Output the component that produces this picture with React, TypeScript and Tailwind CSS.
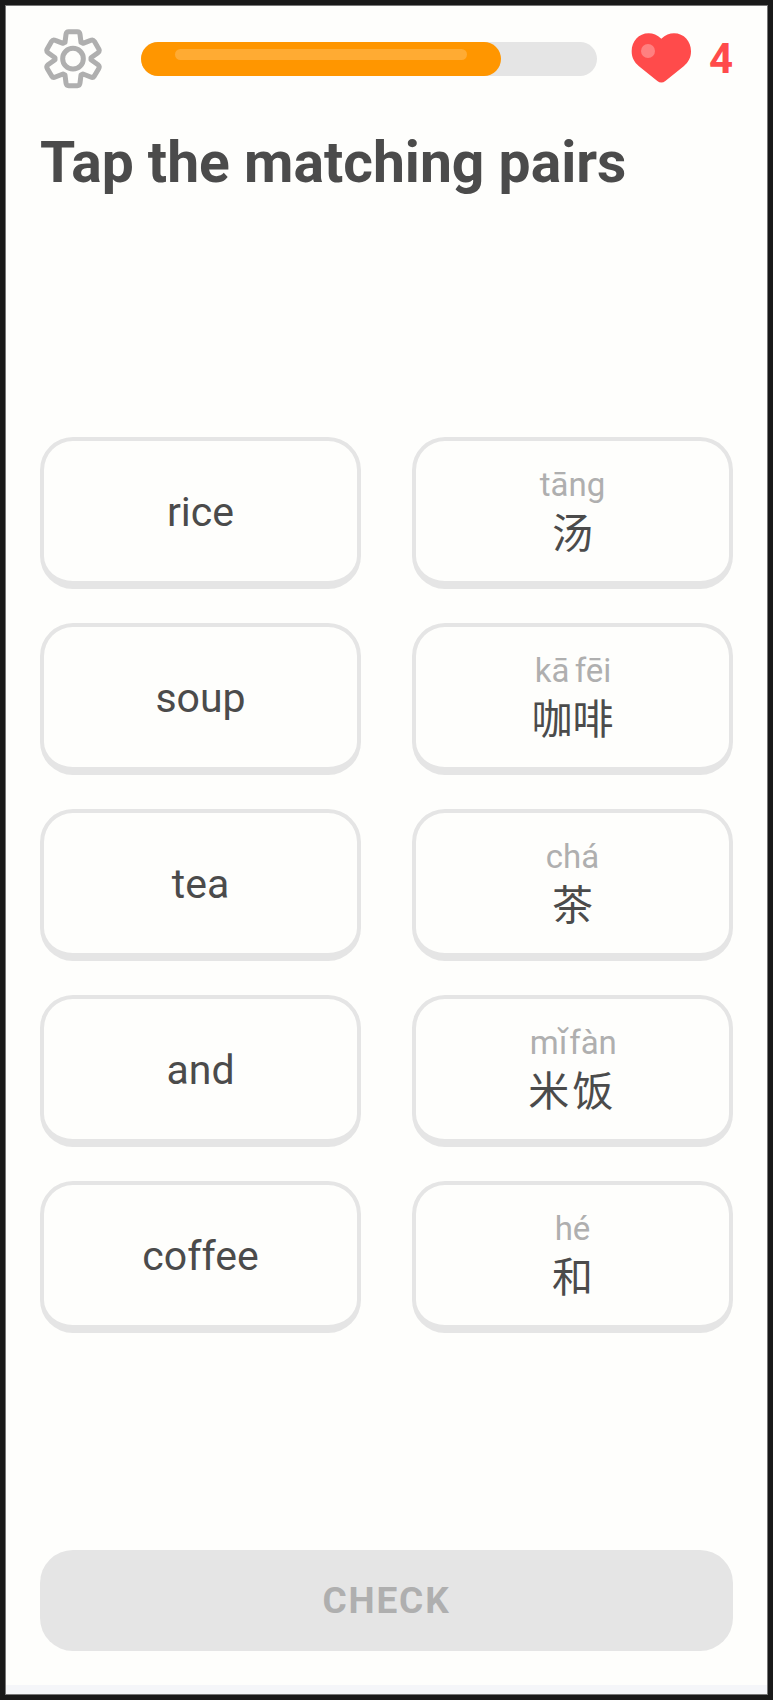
import { useState } from "react";
import clsx from "clsx";

type Syllable = { pinyin: string; hanzi: string };

type Pair = { english: string; chinese: Syllable[] };

const rows: Pair[] = [
  { english: "rice", chinese: [{ pinyin: "tāng", hanzi: "汤" }] },
  {
    english: "soup",
    chinese: [
      { pinyin: "kā", hanzi: "咖" },
      { pinyin: "fēi", hanzi: "啡" },
    ],
  },
  { english: "tea", chinese: [{ pinyin: "chá", hanzi: "茶" }] },
  {
    english: "and",
    chinese: [
      { pinyin: "mǐ", hanzi: "米" },
      { pinyin: "fàn", hanzi: "饭" },
    ],
  },
  { english: "coffee", chinese: [{ pinyin: "hé", hanzi: "和" }] },
];

function GearIcon() {
  return (
    <svg
      viewBox="-90 -89 180 180"
      className="size-[60px]"
      fill="none"
      stroke="#afafaf"
      strokeWidth="15"
      strokeLinejoin="round"
      aria-hidden="true"
    >
      <path d="M-24-49L-21-73Q-20-81-13-81H13Q20-81 21-73L24-49L30-46L53-55Q60-58 64-52L77-30Q81-23 75-18L54-3V3L75 18Q81 23 77 30L64 52Q60 58 53 55L30 46L24 49L21 73Q20 81 13 81H-13Q-20 81-21 73L-24 49L-30 46L-53 55Q-60 58-64 52L-77 30Q-81 23-75 18L-54 3V-3L-75-18Q-81-23-77-30L-64-52Q-60-58-53-55L-30-46Z" />
      <circle r="31" />
    </svg>
  );
}

function HeartIcon() {
  return (
    <svg viewBox="513 100 180 150" className="h-[50px] w-[60px] shrink-0 overflow-visible" aria-hidden="true">
      <path
        fill="#ff4b4b"
        d="M604 114C592 103 579 98 566 98C536 98 515 122 515 152C515 172 524 186 536 196L592 241Q604 250 616 241L672 196C684 186 693 172 693 152C693 122 672 98 642 98C629 98 616 103 604 114Z"
      />
      <circle cx="564" cy="151" r="21" fill="#ff8080" />
    </svg>
  );
}

function ProgressBar({ value }: { value: number }) {
  return (
    <div
      role="progressbar"
      aria-label="Lesson progress"
      aria-valuenow={value}
      aria-valuemin={0}
      aria-valuemax={100}
      className="h-[34px] flex-1 rounded-full bg-[#e5e5e5]"
    >
      <div
        className="h-full rounded-full bg-[#ff9600] px-[34px] pt-[7px]"
        style={{ width: `${value}%` }}
      >
        <div className="h-[11px] rounded-full bg-[#ffab33]" />
      </div>
    </div>
  );
}

function Card({
  selected,
  onClick,
  children,
}: {
  selected: boolean;
  onClick: () => void;
  children: React.ReactNode;
}) {
  return (
    <button
      type="button"
      aria-pressed={selected}
      onClick={onClick}
      className={clsx(
        "flex h-[152px] items-center justify-center rounded-[33px] border-4 border-b-8 pt-[3px] text-[41px]",
        selected ? "border-[#84d8ff] bg-[#ddf4ff]" : "border-[#e5e5e5]"
      )}
    >
      {children}
    </button>
  );
}

export default function App() {
  const [selected, setSelected] = useState<string | null>(null);

  return (
    <div className="flex min-h-screen flex-col border-[5px] border-[#191919] bg-[#fefefc] font-['Roboto','Noto_Sans_CJK_SC',sans-serif] text-[#4b4b4b]">
      <div className="flex flex-1 flex-col border border-[#777777]">
        <header className="flex items-center px-[34px] pt-[21px]">
          <button
            type="button"
            aria-label="Settings"
            className="mr-[35px] flex h-16 w-[66px] items-center justify-center"
          >
            <GearIcon />
          </button>
          <ProgressBar value={79} />
          <div className="ml-[34px] flex items-center gap-[18px]">
            <HeartIcon />
            <span className="text-[42px] leading-[48px] font-bold text-[#ff4b4b]">4</span>
          </div>
        </header>

        <h1 className="mt-10 px-[34px] text-[57px] leading-[64px] font-bold">
          Tap the matching pairs
        </h1>

        <main className="flex flex-1 flex-col justify-center px-[34px] pt-[25px]">
          <div className="grid grid-cols-2 gap-x-[51px] gap-y-[34px]">
            {rows.map(({ english, chinese }) => {
              const word = chinese.map((s) => s.hanzi).join("");
              return [
                <Card
                  key={english}
                  selected={selected === english}
                  onClick={() => setSelected(english)}
                >
                  {english}
                </Card>,
                <Card key={word} selected={selected === word} onClick={() => setSelected(word)}>
                  {chinese.map((s) => (
                    <span key={s.hanzi} className="flex flex-col items-center">
                      <span className="text-[33px] leading-[42px] text-[#afafaf]">{s.pinyin}</span>
                      <span className="leading-[56px]">{s.hanzi}</span>
                    </span>
                  ))}
                </Card>,
              ];
            })}
          </div>
        </main>

        <footer className="px-[34px] pb-[34px]">
          <button
            type="button"
            disabled={!selected}
            className="h-[101px] w-full rounded-[33px] bg-[#e5e5e5] text-[37px] font-bold tracking-wider text-[#afafaf]"
          >
            CHECK
          </button>
        </footer>
        <div className="h-[9px] bg-[#f5f6f9]" />
      </div>
    </div>
  );
}
